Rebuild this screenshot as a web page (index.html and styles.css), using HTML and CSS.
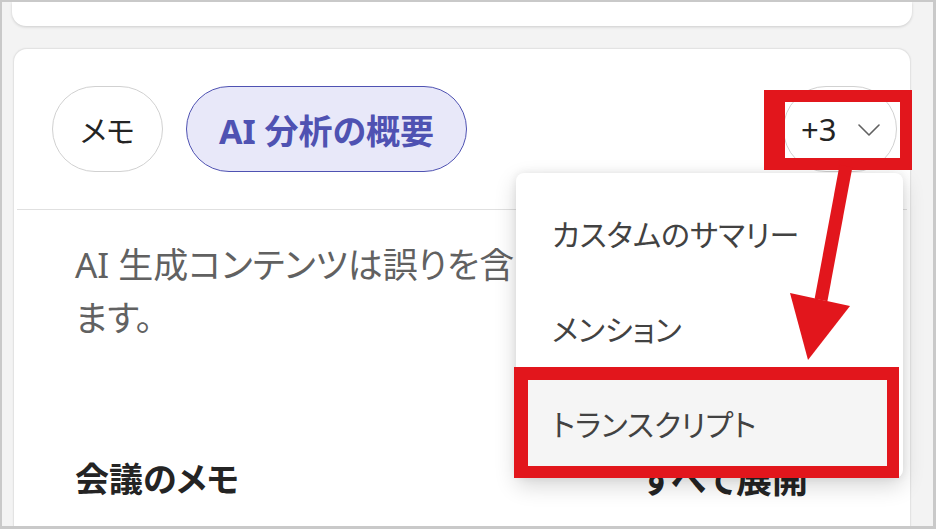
FILE: index.html
```html
<!DOCTYPE html>
<html lang="ja">
<head>
<meta charset="utf-8">
<title>会議のまとめ</title>
<link rel="stylesheet" href="styles.css">
</head>
<body>
<div class="frame">
  <div class="card card-prev"></div>
  <section class="card recap">
    <div class="tabs">
      <button class="pill">メモ</button>
      <button class="pill pill-active">AI 分析の概要</button>
      <button class="pill pill-more">+3
        <svg class="chevron" width="22" height="12" viewBox="0 0 22 12"><path d="M1 1 L11 11 L21 1" fill="none" stroke="#616161" stroke-width="1.6" stroke-linecap="round" stroke-linejoin="round"/></svg>
      </button>
    </div>
    <div class="content">
      <p class="disclaimer">AI 生成コンテンツは誤りを含む可能性があり<br>ます。</p>
      <div class="section-head">
        <h2 class="section-title">会議のメモ</h2>
        <a class="expand-all">すべて展開</a>
      </div>
    </div>
    <ul class="menu">
      <li class="menu-item">カスタムのサマリー</li>
      <li class="menu-item">メンション</li>
      <li class="menu-item menu-item-hover">トランスクリプト</li>
    </ul>
  </section>
</div>
<svg class="callouts" width="936" height="529" viewBox="0 0 936 529">
  <path fill="#e2161c" fill-rule="evenodd" d="M764 90 H912 V170 H764 Z M785 102 V158 H900 V102 Z"/>
  <path fill="#e2161c" fill-rule="evenodd" d="M514 367 H899 V478 H514 Z M528 380 V466 H887 V380 Z"/>
  <line x1="846" y1="166" x2="821" y2="300" stroke="#e2161c" stroke-width="13"/>
  <polygon fill="#e2161c" points="790,293 850,306 808,360"/>
</svg>
</body>
</html>
```

FILE: styles.css
```css
* { box-sizing: border-box; }

html, body {
  margin: 0;
  padding: 0;
}

body {
  position: relative;
  width: 936px;
  height: 529px;
  overflow: hidden;
  font-family: "Noto Sans", "Noto Sans CJK JP", sans-serif;
  font-feature-settings: "palt";
  color: #242424;
  background: #ffffff;
}

.frame {
  width: 936px;
  height: 529px;
  border-style: solid;
  border-color: #c9c9c9;
  border-width: 2px 3px 3px 2px;
  background: #f3f3f3;
  display: flex;
  flex-direction: column;
  overflow: hidden;
}

.card {
  background: #ffffff;
}

.card-prev {
  flex: none;
  height: 24px;
  width: 900px;
  margin-left: 10px;
  border-radius: 0 0 14px 14px;
  box-shadow: 0 1px 3px rgba(0, 0, 0, 0.16);
}

.recap {
  position: relative;
  flex: 1;
  width: 898px;
  margin: 22px 0 0 11px;
  border: 1px solid #e3e3e3;
  border-bottom: none;
  border-radius: 14px 14px 0 0;
  box-shadow: 0 0 2px rgba(0, 0, 0, 0.06);
}

/* tab strip */
.tabs {
  display: flex;
  align-items: center;
  gap: 23px;
  margin: 0 3px;
  padding: 37px 10px 37px 35px;
  border-bottom: 1px solid #e0e0e0;
}

.pill {
  height: 86px;
  width: 111px;
  padding: 0;
  border: 1px solid #d1d1d1;
  border-radius: 43px;
  background: #ffffff;
  font-family: inherit;
  font-feature-settings: "palt";
  font-size: 30px;
  color: #242424;
  display: flex;
  align-items: center;
  justify-content: center;
  white-space: nowrap;
}

.pill-active {
  width: 281px;
  background: #e8e8f9;
  border: 1.5px solid #4f52b2;
  color: #4f52b2;
  font-weight: 700;
  font-size: 34px;
}

.pill-more {
  margin-left: auto;
  width: 114px;
  padding: 0 16px 0 17px;
  gap: 16px;
  font-size: 31px;
  justify-content: space-between;
}

.chevron {
  flex: none;
  margin-top: 2px;
}

/* body text */
.content {
  padding: 28px 102px 0 61px;
}

.disclaimer {
  margin: 0;
  font-size: 35px;
  line-height: 53px;
  color: #616161;
}

.section-head {
  margin-top: 109px;
  display: flex;
  align-items: center;
  justify-content: space-between;
  height: 48px;
}

.section-title {
  margin: 0;
  font-size: 34px;
  font-weight: 700;
  color: #242424;
}

.expand-all {
  font-size: 36px;
  font-weight: 700;
  color: #242424;
}

/* overflow menu */
.menu {
  position: absolute;
  left: 502px;
  top: 124px;
  width: 387px;
  margin: 0;
  padding: 12px 4px 8px;
  list-style: none;
  background: #ffffff;
  border-radius: 8px;
  box-shadow: 0 8px 22px rgba(0, 0, 0, 0.16), 0 0 8px rgba(0, 0, 0, 0.08);
}

.menu-item {
  height: 95px;
  padding-left: 32px;
  display: flex;
  align-items: center;
  font-size: 30px;
  color: #424242;
  border-radius: 4px;
}

.menu-item-hover {
  background: #f5f5f5;
}

.callouts {
  position: absolute;
  left: 0;
  top: 0;
  pointer-events: none;
}
```
